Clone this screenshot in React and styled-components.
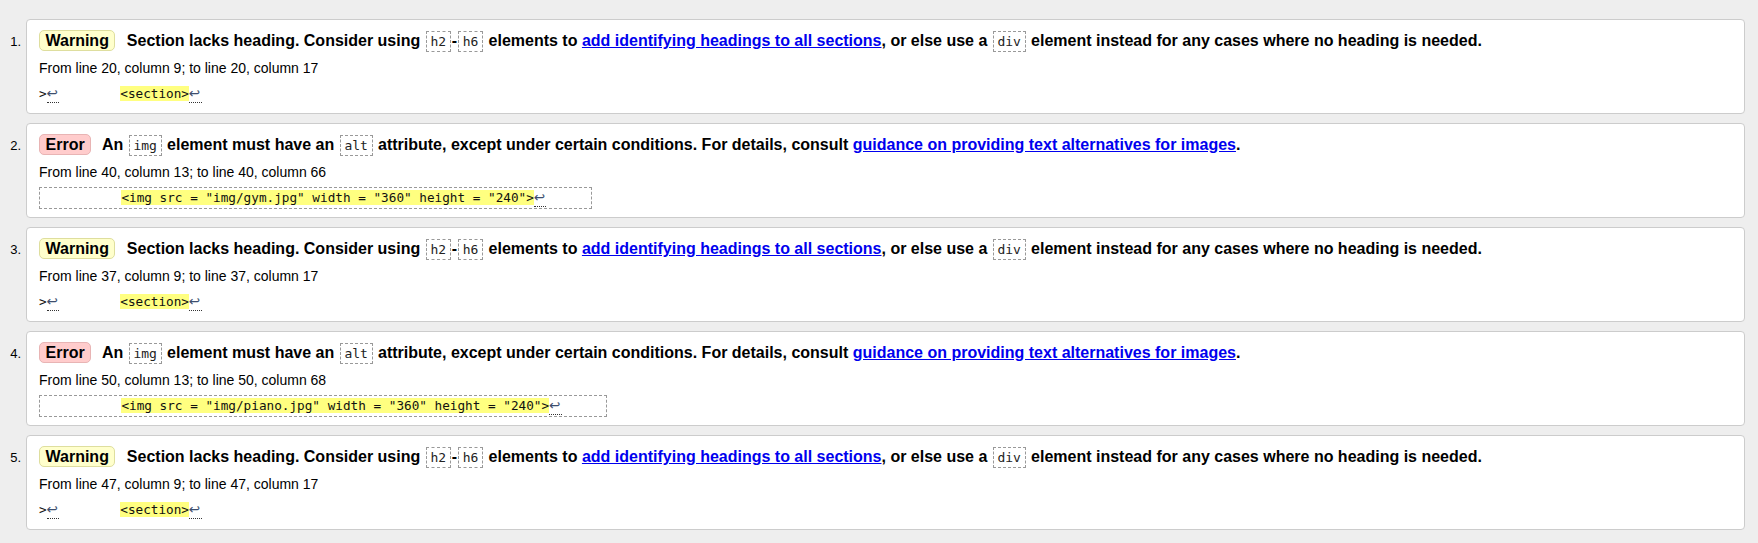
import React from "react";
import styled, { createGlobalStyle } from "styled-components";

const GlobalStyle = createGlobalStyle`
  html, body {
    margin: 0;
    padding: 0;
    background: #eeeeee;
  }
  body {
    font-family: "Liberation Sans", Arial, Helvetica, sans-serif;
    color: #000;
  }
`;

const List = styled.ol`
  list-style: none;
  margin: 0;
  padding: 19px 13px 17px 0;
  display: flex;
  flex-direction: column;
  gap: 9px;
`;

const Item = styled.li`
  display: flex;
  align-items: baseline;
`;

const Num = styled.span`
  flex: none;
  width: 26px;
  box-sizing: border-box;
  padding-right: 5px;
  text-align: right;
  font-size: 13px;
`;

const Card = styled.div`
  flex: 1;
  background: #fff;
  border: 1px solid #cccccc;
  border-radius: 4px;
  padding: 8px 12px;
`;

const Message = styled.p`
  margin: 0;
  font-size: 16px;
  font-weight: bold;
  line-height: 25px;
`;

const Badge = styled.strong`
  display: inline-block;
  line-height: 19px;
  padding: 0 5.5px;
  margin-right: 7px;
  border-radius: 5px;
  border: 1px solid ${(p) => (p.$error ? "#e8b4b4" : "#dede9e")};
  background: ${(p) => (p.$error ? "#ffcccc" : "#ffffcc")};
`;

const Code = styled.code`
  font-family: "DejaVu Sans Mono", monospace;
  font-weight: normal;
  font-size: 13px;
  line-height: 16px;
  color: #222;
  border: 1px dashed #999;
  padding: 2px 3.7px;
  margin: 0 1px;
`;

const Link = styled.a`
  color: #0000ee;
  text-decoration: underline;
`;

const Location = styled.p`
  margin: 5px 0 0;
  font-size: 14px;
  line-height: 20px;
`;

const Extract = styled.div`
  margin-top: 5px;
  width: fit-content;
  height: 22px;
  box-sizing: border-box;
  font-family: "DejaVu Sans Mono", monospace;
  font-size: 12.7px;
  line-height: 20px;
  white-space: pre;
  color: #111;
  border: ${(p) => (p.$boxed ? "1px dashed #999" : "none")};
  padding: ${(p) => (p.$boxed ? "0 6px 0 5px" : "1px 0")};
`;

const Mark = styled.mark`
  background: #ffff80;
  color: inherit;
`;

const LineBreak = styled.span`
  display: inline-block;
  width: 12.5px;
  font-family: "DejaVu Sans", sans-serif;
  font-size: 13.5px;
  line-height: 14px;
  padding-bottom: 2px;
  border-bottom: 1px dotted #333;
  color: #3d4e6e;
`;

const SectionWarning = () => (
  <Message>
    <Badge>Warning</Badge> Section lacks heading. Consider using{" "}
    <Code>h2</Code>-<Code>h6</Code> elements to{" "}
    <Link href="#">add identifying headings to all sections</Link>, or else
    use a <Code>div</Code> element instead for any cases where no heading is
    needed.
  </Message>
);

const AltError = () => (
  <Message>
    <Badge $error>Error</Badge> An <Code>img</Code> element must have an{" "}
    <Code>alt</Code> attribute, except under certain conditions. For details,
    consult{" "}
    <Link href="#">guidance on providing text alternatives for images</Link>.
  </Message>
);

const messages = [
  { type: "warning", loc: "From line 20, column 9; to line 20, column 17" },
  {
    type: "error",
    loc: "From line 40, column 13; to line 40, column 66",
    code: '<img src = "img/gym.jpg" width = "360" height = "240">',
  },
  { type: "warning", loc: "From line 37, column 9; to line 37, column 17" },
  {
    type: "error",
    loc: "From line 50, column 13; to line 50, column 68",
    code: '<img src = "img/piano.jpg" width = "360" height = "240">',
  },
  { type: "warning", loc: "From line 47, column 9; to line 47, column 17" },
];

export default function App() {
  return (
    <>
      <GlobalStyle />
      <List>
        {messages.map((m, i) => (
          <Item key={i}>
            <Num>{i + 1}.</Num>
            <Card>
              {m.type === "warning" ? <SectionWarning /> : <AltError />}
              <Location>{m.loc}</Location>
              {m.type === "warning" ? (
                <Extract>
                  {">"}
                  <LineBreak>↩</LineBreak>
                  {"        "}
                  <Mark>{"<section>"}</Mark>
                  <LineBreak>↩</LineBreak>
                </Extract>
              ) : (
                <Extract $boxed>
                  {"          "}
                  <Mark>{m.code}</Mark>
                  <LineBreak>↩</LineBreak>
                  {"     "}
                </Extract>
              )}
            </Card>
          </Item>
        ))}
      </List>
    </>
  );
}
